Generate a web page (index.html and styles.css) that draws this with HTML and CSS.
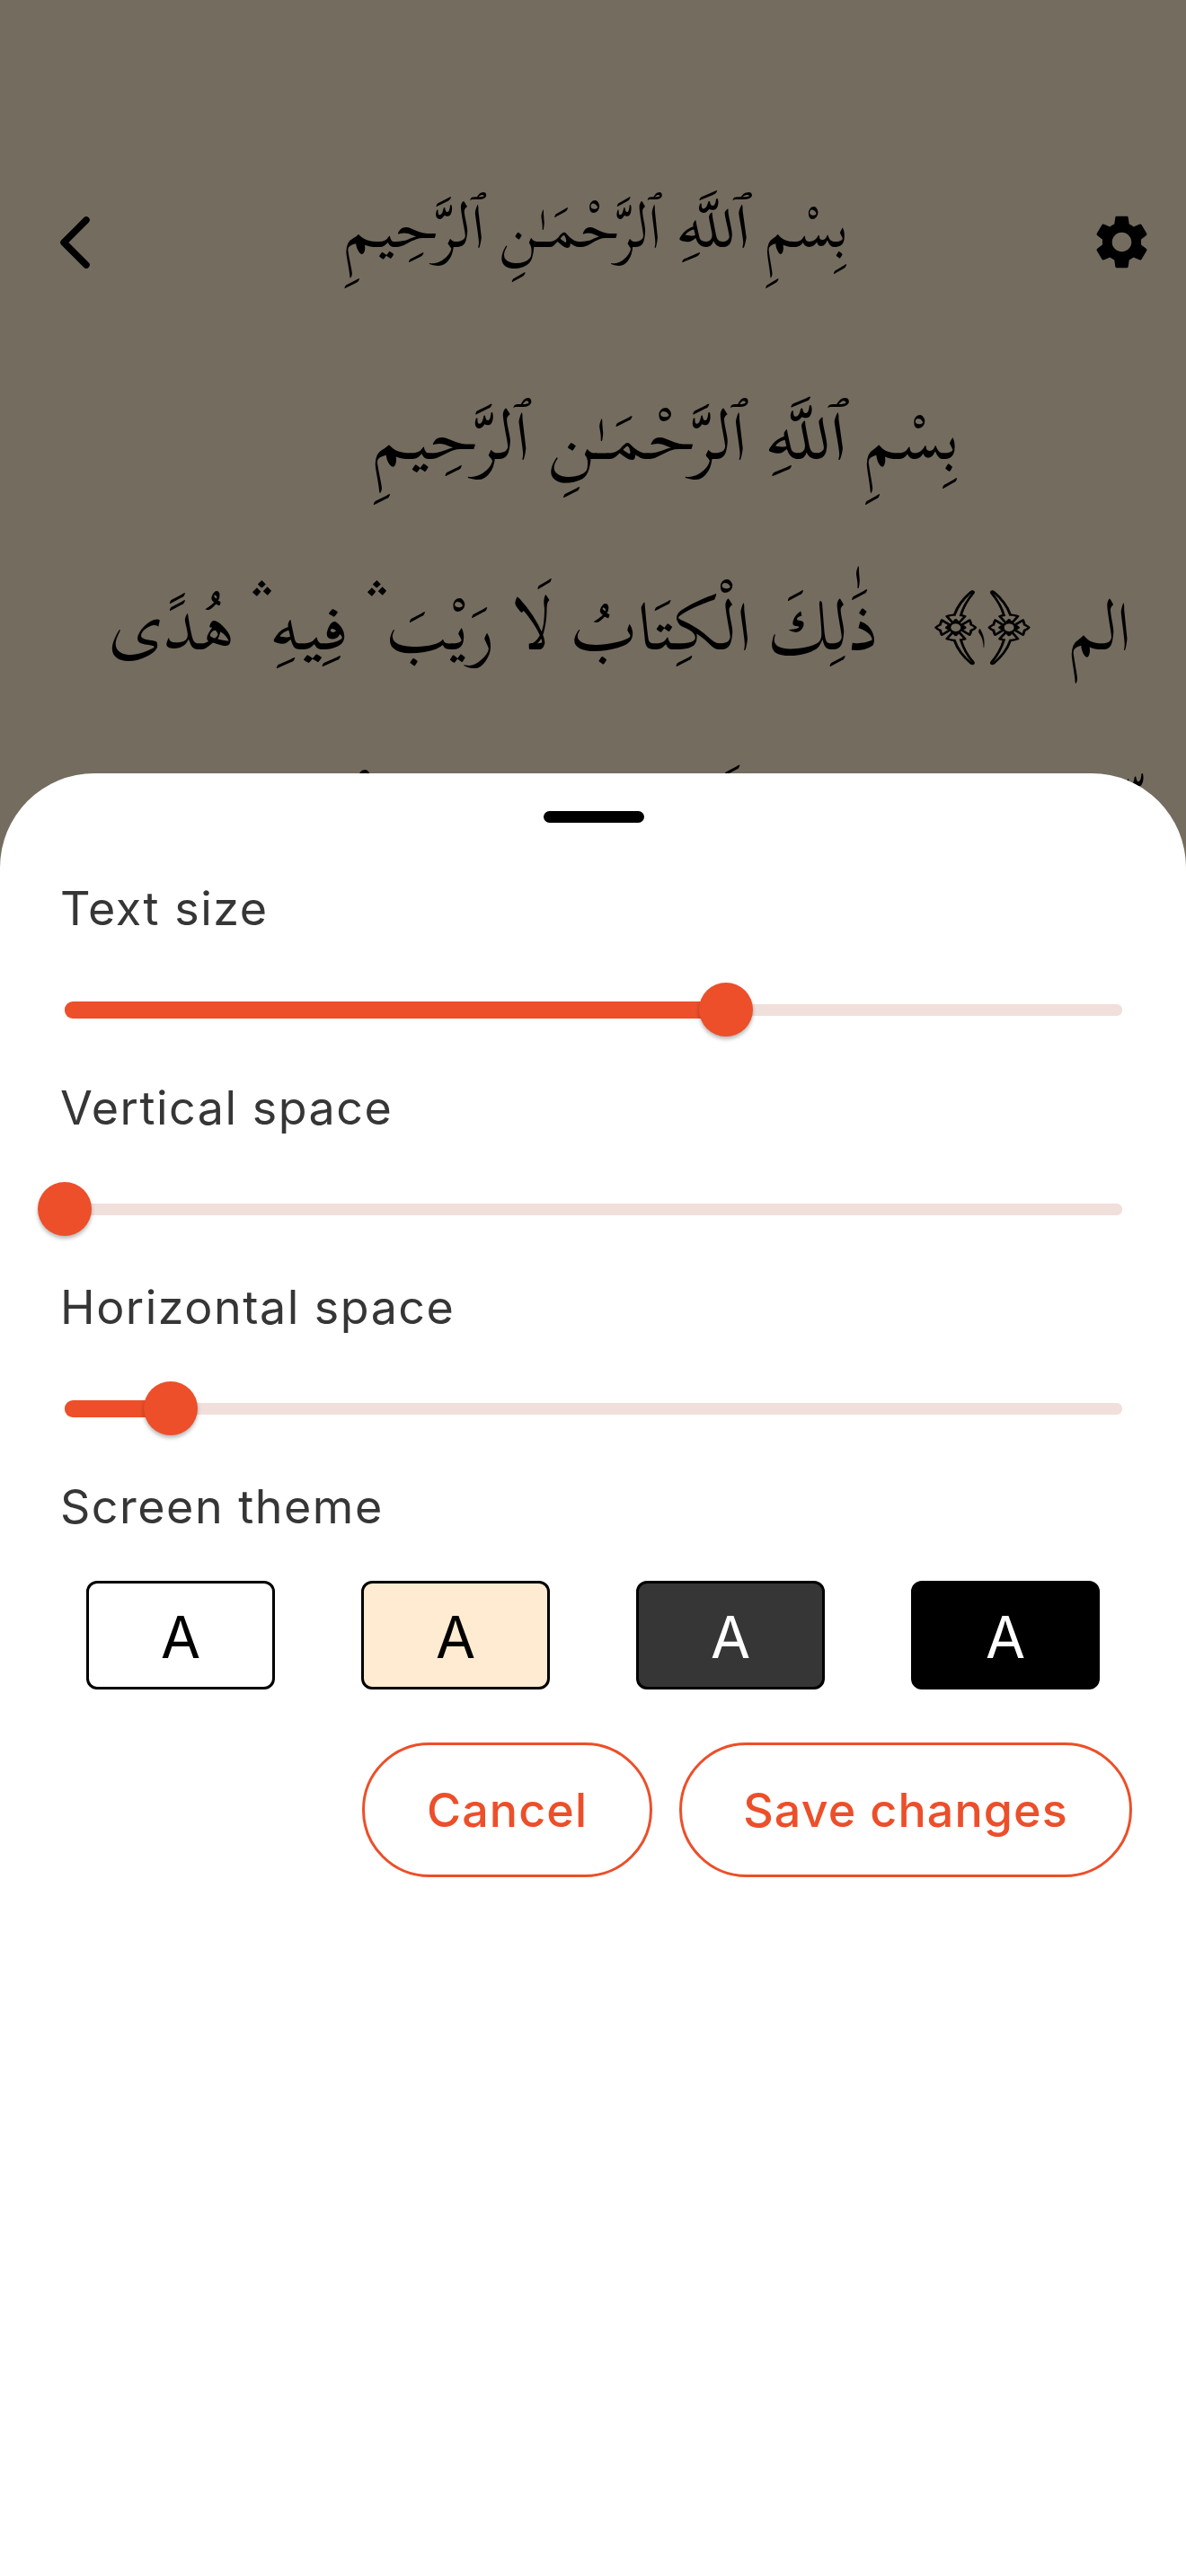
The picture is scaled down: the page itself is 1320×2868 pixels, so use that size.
FILE: index.html
```html
<!DOCTYPE html>
<html lang="en">
<head>
<meta charset="utf-8">
<title>Reading settings</title>
<link rel="stylesheet" href="styles.css">
</head>
<body>
<div class="screen">
  <header class="bar">
    <svg class="back" viewBox="0 0 40 64"><path d="M33 7 8 32 33 57" fill="none" stroke="#000" stroke-width="7.5" stroke-linecap="round" stroke-linejoin="round"/></svg>
    <h1 class="verse title" dir="rtl">
      <span class="w" style="width:90px;--s:.91">بِسْمِ</span>
      <span class="w" style="width:82px;--s:1.27">ٱللَّهِ</span>
      <span class="w" style="width:178px;--s:.95">ٱلرَّحْمَـٰنِ</span>
      <span class="w" style="width:156px;--s:1.06">ٱلرَّحِيمِ</span>
    </h1>
    <svg class="gear" viewBox="0 0 24 24"><path fill-rule="evenodd" d="M19.43 12.98c.04-.32.07-.64.07-.98s-.03-.66-.07-.98l2.11-1.65c.19-.15.24-.42.12-.64l-2-3.46c-.12-.22-.39-.3-.61-.22l-2.49 1c-.52-.4-1.08-.73-1.69-.98l-.38-2.65C14.46 2.18 14.25 2 14 2h-4c-.25 0-.46.18-.49.42l-.38 2.65c-.61.25-1.17.59-1.69.98l-2.49-1c-.23-.09-.49 0-.61.22l-2 3.46c-.13.22-.07.49.12.64l2.11 1.65c-.04.32-.07.65-.07.98s.03.66.07.98l-2.11 1.65c-.19.15-.24.42-.12.64l2 3.46c.12.22.39.3.61.22l2.49-1c.52.4 1.08.73 1.69.98l.38 2.65c.03.24.24.42.49.42h4c.25 0 .46-.18.49-.42l.38-2.65c.61-.25 1.17-.59 1.69-.98l2.49 1c.23.09.49 0 .61-.22l2-3.46c.12-.22.07-.49-.12-.64l-2.11-1.65zM12 15.75a3.75 3.75 0 1 1 0-7.5 3.75 3.75 0 0 1 0 7.5z"/></svg>
  </header>
  <main class="page" dir="rtl">
    <p class="verse basmala">
      <span class="w" style="width:100px;--s:.94">بِسْمِ</span>
      <span class="w" style="width:91px;--s:1.27">ٱللَّهِ</span>
      <span class="w" style="width:220px;--s:1.06">ٱلرَّحْمَـٰنِ</span>
      <span class="w" style="width:174px;--s:1.07">ٱلرَّحِيمِ</span>
    </p>
    <p class="verse second">
      <span class="w" style="width:62px;--s:.93">الم</span>
      <span class="w orn" style="width:41px;margin-right:45px">﴿</span>
      <span class="w num" style="width:8px;margin-right:10px">١</span>
      <span class="w orn" style="width:41px;margin-right:9px">﴾</span>
      <span class="w" style="width:114px;margin-right:66px">ذَٰلِكَ</span>
      <span class="w" style="width:193px;margin-right:27px;--s:1.04">الْكِتَابُ</span>
      <span class="w" style="width:36px;margin-right:27px;--s:.9">لَا</span>
      <span class="w" style="width:116px;margin-right:28px">رَيْبَ</span>
      <span class="w pause" style="width:19px;margin-right:3px">&nbsp;ۛ</span>
      <span class="w" style="width:80px;margin-right:26px;--s:1.2">فِيهِ</span>
      <span class="w pause" style="width:19px;margin-right:3px">&nbsp;ۛ</span>
      <span class="w" style="width:131px;margin-right:25px">هُدًى</span>
    </p>
    <p class="verse">
      <span class="w" style="width:192px;margin-right:-16px;--y:18px">لِّلْمُتَّقِينَ</span>
      <span class="w orn" style="width:41px;margin-right:32px">﴿</span>
      <span class="w num" style="width:20px;margin-right:8px">٢</span>
      <span class="w orn" style="width:41px;margin-right:8px">﴾</span>
      <span class="w" style="width:140px;margin-right:88px;--y:8px">الَّذِينَ</span>
      <span class="w" style="width:180px;margin-right:30px;--y:6px">يُؤْمِنُونَ</span>
      <span class="w" style="width:170px;margin-right:41px;--y:2px">بِالْغَيْبِ</span>
    </p>
  </main>
  <section class="sheet">
    <div class="handle"></div>
    <div class="setting">
      <div class="label">Text size</div>
      <div class="slider"><div class="fill" style="width:62.5%"></div><div class="knob" style="left:62.5%"></div></div>
    </div>
    <div class="setting">
      <div class="label">Vertical space</div>
      <div class="slider"><div class="knob" style="left:0%"></div></div>
    </div>
    <div class="setting">
      <div class="label">Horizontal space</div>
      <div class="slider"><div class="fill" style="width:10%"></div><div class="knob" style="left:10%"></div></div>
    </div>
    <div class="label">Screen theme</div>
    <div class="themes">
      <button class="theme">A</button>
      <button class="theme sepia">A</button>
      <button class="theme dim">A</button>
      <button class="theme dark">A</button>
    </div>
    <div class="actions">
      <button class="pill cancel">Cancel</button>
      <button class="pill save">Save changes</button>
    </div>
  </section>
</div>
</body>
</html>
```
FILE: styles.css
```css
* { box-sizing: border-box; }
body { margin: 0; font-family: Inter, "Liberation Sans", sans-serif; }
button { font: inherit; padding: 0; margin: 0; }
.screen { width: 1320px; height: 2868px; background: #746c5f; display: flex; flex-direction: column; overflow: hidden; }

.bar { flex: none; height: 345px; padding: 178px 37px 0 56px; display: flex; align-items: flex-start; justify-content: space-between; }
.back { width: 40px; height: 64px; margin: 59.6px 9px 0 7px; }
.gear { width: 69px; height: 69px; margin-top: 57px; }

.verse { margin: 0; display: flex; white-space: nowrap; font-family: "Scheherazade New", "Noto Naskh Arabic", "DejaVu Sans", serif; font-size: 75px; font-weight: 400; line-height: 210px; height: 210px; color: #000; }
.w { flex: none; display: flex; justify-content: center; transform: translateY(var(--y, 0)) scaleX(var(--s, 1)); }
.title { font-size: 68px; line-height: 150px; height: 150px; gap: 17.7px; }
.page { flex: none; height: 515.5px; padding: 37px 65px 0 0; }
.basmala { gap: 21.7px; padding-right: 190px; }
.second { margin-top: 2px; }
.orn { font-family: Amiri, "DejaVu Sans", serif; font-size: 72px; --s: 1.24; --y: -5px; -webkit-text-stroke: .6px #000; }
.num { font-size: 34px; --y: 8px; }
.pause { font-family: "Noto Naskh Arabic", "DejaVu Sans", serif; font-size: 112px; --y: -10px; }

.sheet { position: relative; flex: 1; background: #fff; border-radius: 105px 105px 0 0; padding: 42px 66px 0 67px; display: flex; flex-direction: column; }
.handle { width: 112px; height: 13px; border-radius: 7px; background: #000; align-self: center; margin-bottom: 66.5px; }
.setting { height: 222px; display: flex; flex-direction: column; gap: 76.2px; }
.label { font-size: 52px; line-height: 60px; letter-spacing: 1.5px; color: #363636; }
.slider { position: relative; height: 12.4px; margin: 0 5px; border-radius: 6px; background: #f1dfdc; }
.fill { position: absolute; left: 0; top: -3px; height: 18.4px; border-radius: 9px; background: #ec4f29; }
.knob { position: absolute; top: 50%; width: 60px; height: 60px; margin: -30px 0 0 -30px; border-radius: 50%; background: #ec4f29; box-shadow: 0 3px 4px rgba(0,0,0,.28); }
.themes { display: flex; justify-content: space-between; margin: 52px 30px 59.5px 29px; }
.theme { width: 210px; height: 120.5px; border: 3px solid #000; border-radius: 12px; background: #fff; color: #000; font-size: 64px; line-height: 114px; padding-top: 5px; display: flex; align-items: center; justify-content: center; }
.sepia { background: #ffebd1; }
.dim { background: #363636; color: #fff; }
.dark { background: #000; color: #fff; }
.actions { display: flex; justify-content: flex-end; gap: 30px; margin-right: -6px; }
.pill { height: 150px; border: 3px solid #ec4f29; border-radius: 75px; background: #fff; color: #ec4f29; font-size: 52px; font-weight: 500; letter-spacing: 1.1px; }
.cancel { width: 323px; }
.save { width: 504px; }
```
